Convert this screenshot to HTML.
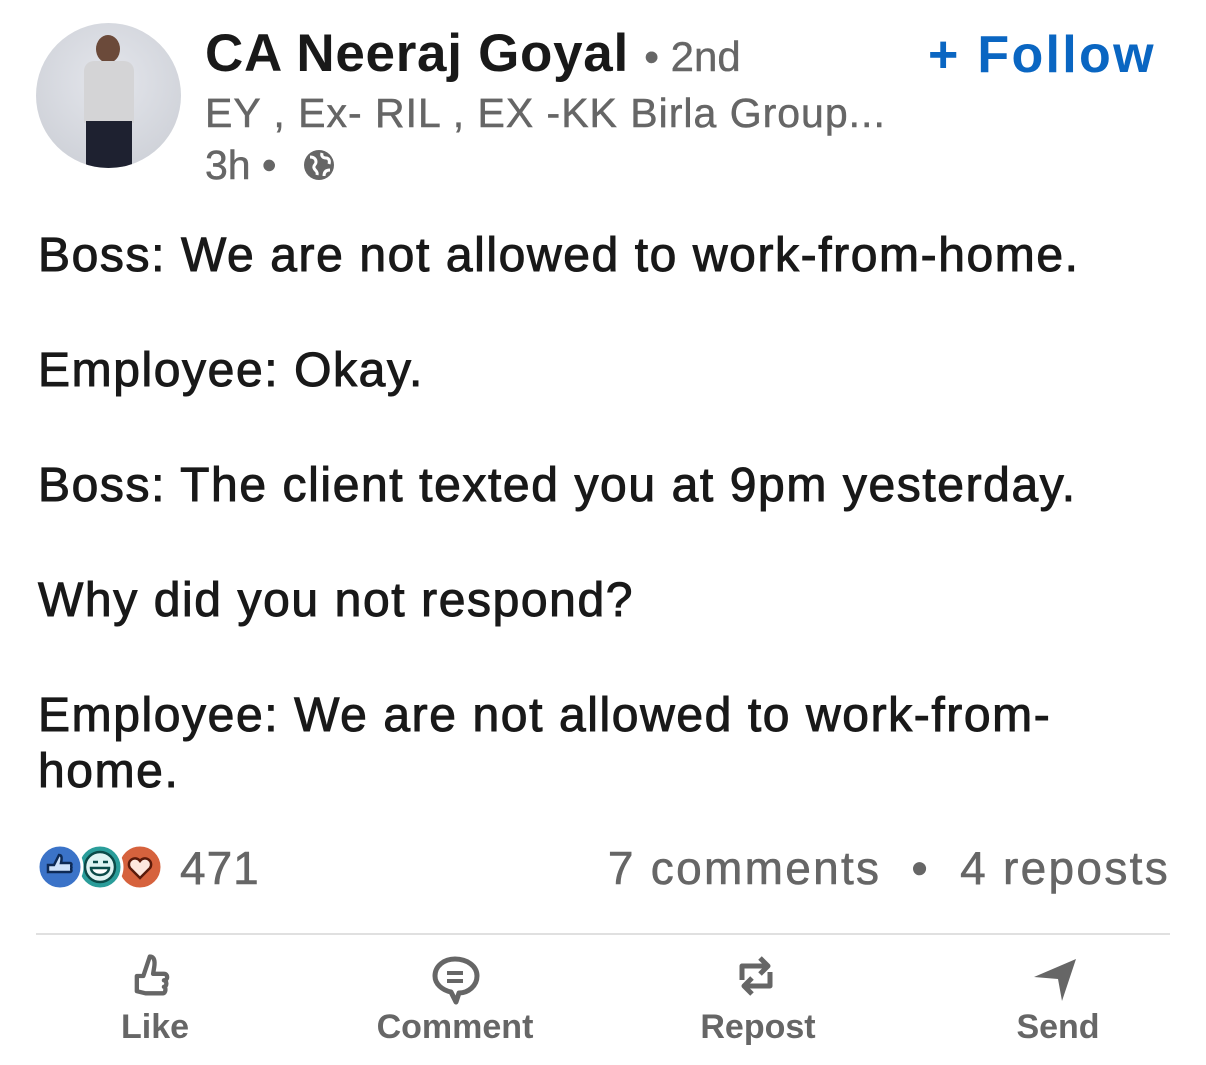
<!DOCTYPE html>
<html><head><meta charset="utf-8"><style>
body{margin:0;width:1206px;height:1065px;background:#fff;font-family:"Liberation Sans",Arial,sans-serif;position:relative;overflow:hidden}
.a{position:absolute;white-space:nowrap}
.body{left:38px;font-size:48px;color:#191919;letter-spacing:1.6px;-webkit-text-stroke:1px #191919}
.lbl{font-size:34px;font-weight:bold;color:#666;top:1008px;transform:translateX(-50%)}
</style></head><body>
<div class="a" style="left:36px;top:23px;width:145px;height:145px;border-radius:50%;background:radial-gradient(circle at 50% 40%,#e4e6ec,#c9ccd3);overflow:hidden">
 <div style="position:absolute;left:60px;top:12px;width:24px;height:28px;border-radius:50%;background:#6b4a3a"></div>
 <div style="position:absolute;left:48px;top:38px;width:50px;height:62px;background:#d4d4d6;border-radius:10px 10px 0 0"></div>
 <div style="position:absolute;left:50px;top:98px;width:46px;height:50px;background:#1e2130"></div>
</div>
<div class="a" style="left:205px;top:23px;font-size:53px;font-weight:bold;color:#191919;letter-spacing:0.7px">CA Neeraj Goyal <span style="font-weight:normal;color:#666;font-size:42px;letter-spacing:0;-webkit-text-stroke:0.4px #666">• 2nd</span></div>
<div class="a" style="left:928px;top:25px;font-size:52px;font-weight:bold;color:#0a66c2;letter-spacing:2.3px">+ Follow</div>
<div class="a" style="left:205px;top:90px;font-size:41px;color:#666;letter-spacing:1px;-webkit-text-stroke:0.5px #666">EY , Ex- RIL , EX -KK Birla Group...</div>
<div class="a" style="left:205px;top:142px;font-size:41px;color:#666;-webkit-text-stroke:0.5px #666">3h •</div>
<svg class="a" style="left:302px;top:148px" width="34" height="34" viewBox="0 0 34 34"><circle cx="17" cy="17" r="15" fill="#666"/><path d="M8 9c4 0 6 2 6 5s-3 3-2 6 4 3 3 7M20 5c-1 3 1 5 4 5s4 3 3 6M22 28c0-4 2-6 6-6" stroke="#fff" stroke-width="3" fill="none"/></svg>
<div class="a body" style="top:228px">Boss: We are not allowed to work-from-home.</div>
<div class="a body" style="top:343px">Employee: Okay.</div>
<div class="a body" style="top:458px">Boss: The client texted you at 9pm yesterday.</div>
<div class="a body" style="top:573px">Why did you not respond?</div>
<div class="a body" style="top:688px">Employee: We are not allowed to work-from-</div>
<div class="a body" style="top:744px">home.</div>
<svg class="a" style="left:36px;top:843px" width="134" height="48" viewBox="0 0 134 48">
<circle cx="104" cy="24" r="22" fill="#d6623d" stroke="#fff" stroke-width="3"/>
<path d="M104 35l-10-10a6 6 0 0 1 10-7a6 6 0 0 1 10 7z" fill="#fde7de" stroke="#5a1a0a" stroke-width="2.5"/>
<circle cx="64" cy="24" r="22" fill="#2a9d9a" stroke="#fff" stroke-width="3"/>
<circle cx="64" cy="24" r="15" fill="#dff3f2" stroke="#0b4a48" stroke-width="2.5"/>
<path d="M55 25h18a9 7 0 0 1-18 0zM57 19h5M67 19h5" fill="#fff" stroke="#0b4a48" stroke-width="2.5"/>
<circle cx="24" cy="24" r="22" fill="#3b73c8" stroke="#fff" stroke-width="3"/>
<path d="M12 22h6l5-10c3 0 3 3 2 8h9c2 0 2 3 0 3c2 0 2 3 0 3c2 0 2 3 0 3h-16h-6z" fill="#cfe2fb" stroke="#0e2a55" stroke-width="2.5"/>
</svg>
<div class="a" style="left:180px;top:841px;font-size:46px;color:#666;letter-spacing:1px;-webkit-text-stroke:0.6px #666">471</div>
<div class="a" style="right:36px;top:841px;font-size:46px;color:#666;letter-spacing:2.3px;-webkit-text-stroke:0.6px #666">7 comments &nbsp;•&nbsp; 4 reposts</div>
<div class="a" style="left:36px;top:933px;width:1134px;height:2px;background:#e0e0e0"></div>
<svg class="a" style="left:130px;top:950px" width="44" height="52" viewBox="0 0 40 48"><path d="M6 24h6l6-18c4 0 5 4 4 10l-1 6h10c4 0 4 6 0 6c3 0 3 6 0 6c2 0 2 6-1 6h-16l-8-2z" fill="none" stroke="#666" stroke-width="4" stroke-linejoin="round"/></svg>
<div class="a lbl" style="left:155px">Like</div>
<svg class="a" style="left:428px;top:955px" width="54" height="50" viewBox="0 0 54 50"><path d="M27 4c12 0 22 7 22 17c0 10-9 17-18 17l-3 9l-5-10c-9-2-16-8-16-16c0-10 9-17 20-17z" fill="none" stroke="#666" stroke-width="5" stroke-linejoin="round"/><path d="M19 18h16M19 26h16" stroke="#666" stroke-width="4"/></svg>
<div class="a lbl" style="left:455px">Comment</div>
<svg class="a" style="left:734px;top:950px" width="44" height="52" viewBox="0 0 44 52"><path d="M8 30v-14h24M26 8l8 8l-8 8M36 22v14h-24M18 28l-8 8l8 8" fill="none" stroke="#666" stroke-width="5" stroke-linejoin="round"/></svg>
<div class="a lbl" style="left:758px">Repost</div>
<svg class="a" style="left:1030px;top:955px" width="50" height="50" viewBox="0 0 50 50"><path d="M4 22L46 4L32 46L28 24z" fill="#666"/></svg>
<div class="a lbl" style="left:1058px">Send</div>
</body></html>
